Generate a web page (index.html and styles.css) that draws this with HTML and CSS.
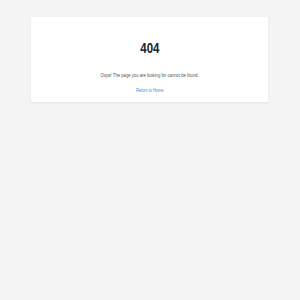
FILE: index.html
```html
<!DOCTYPE html>
<html>
<head>
<meta charset="utf-8">
<link rel="stylesheet" href="styles.css">
</head>
<body>
<div class="page">
  <div class="card">
    <h1 class="code">404</h1>
    <p class="message">Oops! The page you are looking for cannot be found.</p>
    <a class="home-link" href="#">Return to Home</a>
  </div>
</div>
</body>
</html>
```
FILE: styles.css
```css
html, body {
  margin: 0;
  padding: 0;
  background: #f4f4f4;
  height: 100%;
}
body {
  font-family: "Liberation Sans", Arial, sans-serif;
}
.page {
  padding: 17px 32px 0 31px;
}
.card {
  background: #ffffff;
  box-shadow: 0 1px 2px rgba(0,0,0,0.08);
  display: flex;
  flex-direction: column;
  align-items: center;
  padding: 23px 0 9px;
}
.code {
  margin: 0;
  font-size: 15.5px;
  line-height: 15px;
  font-weight: bold;
  color: #222222;
  transform: scaleX(0.74);
}
.message {
  margin: 17px 0 0;
  font-size: 5.2px;
  line-height: 6px;
  color: #555555;
  transform: scaleX(0.81);
}
.home-link {
  margin-top: 9px;
  font-size: 5px;
  line-height: 6px;
  color: #3b8be0;
  text-decoration: none;
  transform: scaleX(0.78);
}
```
